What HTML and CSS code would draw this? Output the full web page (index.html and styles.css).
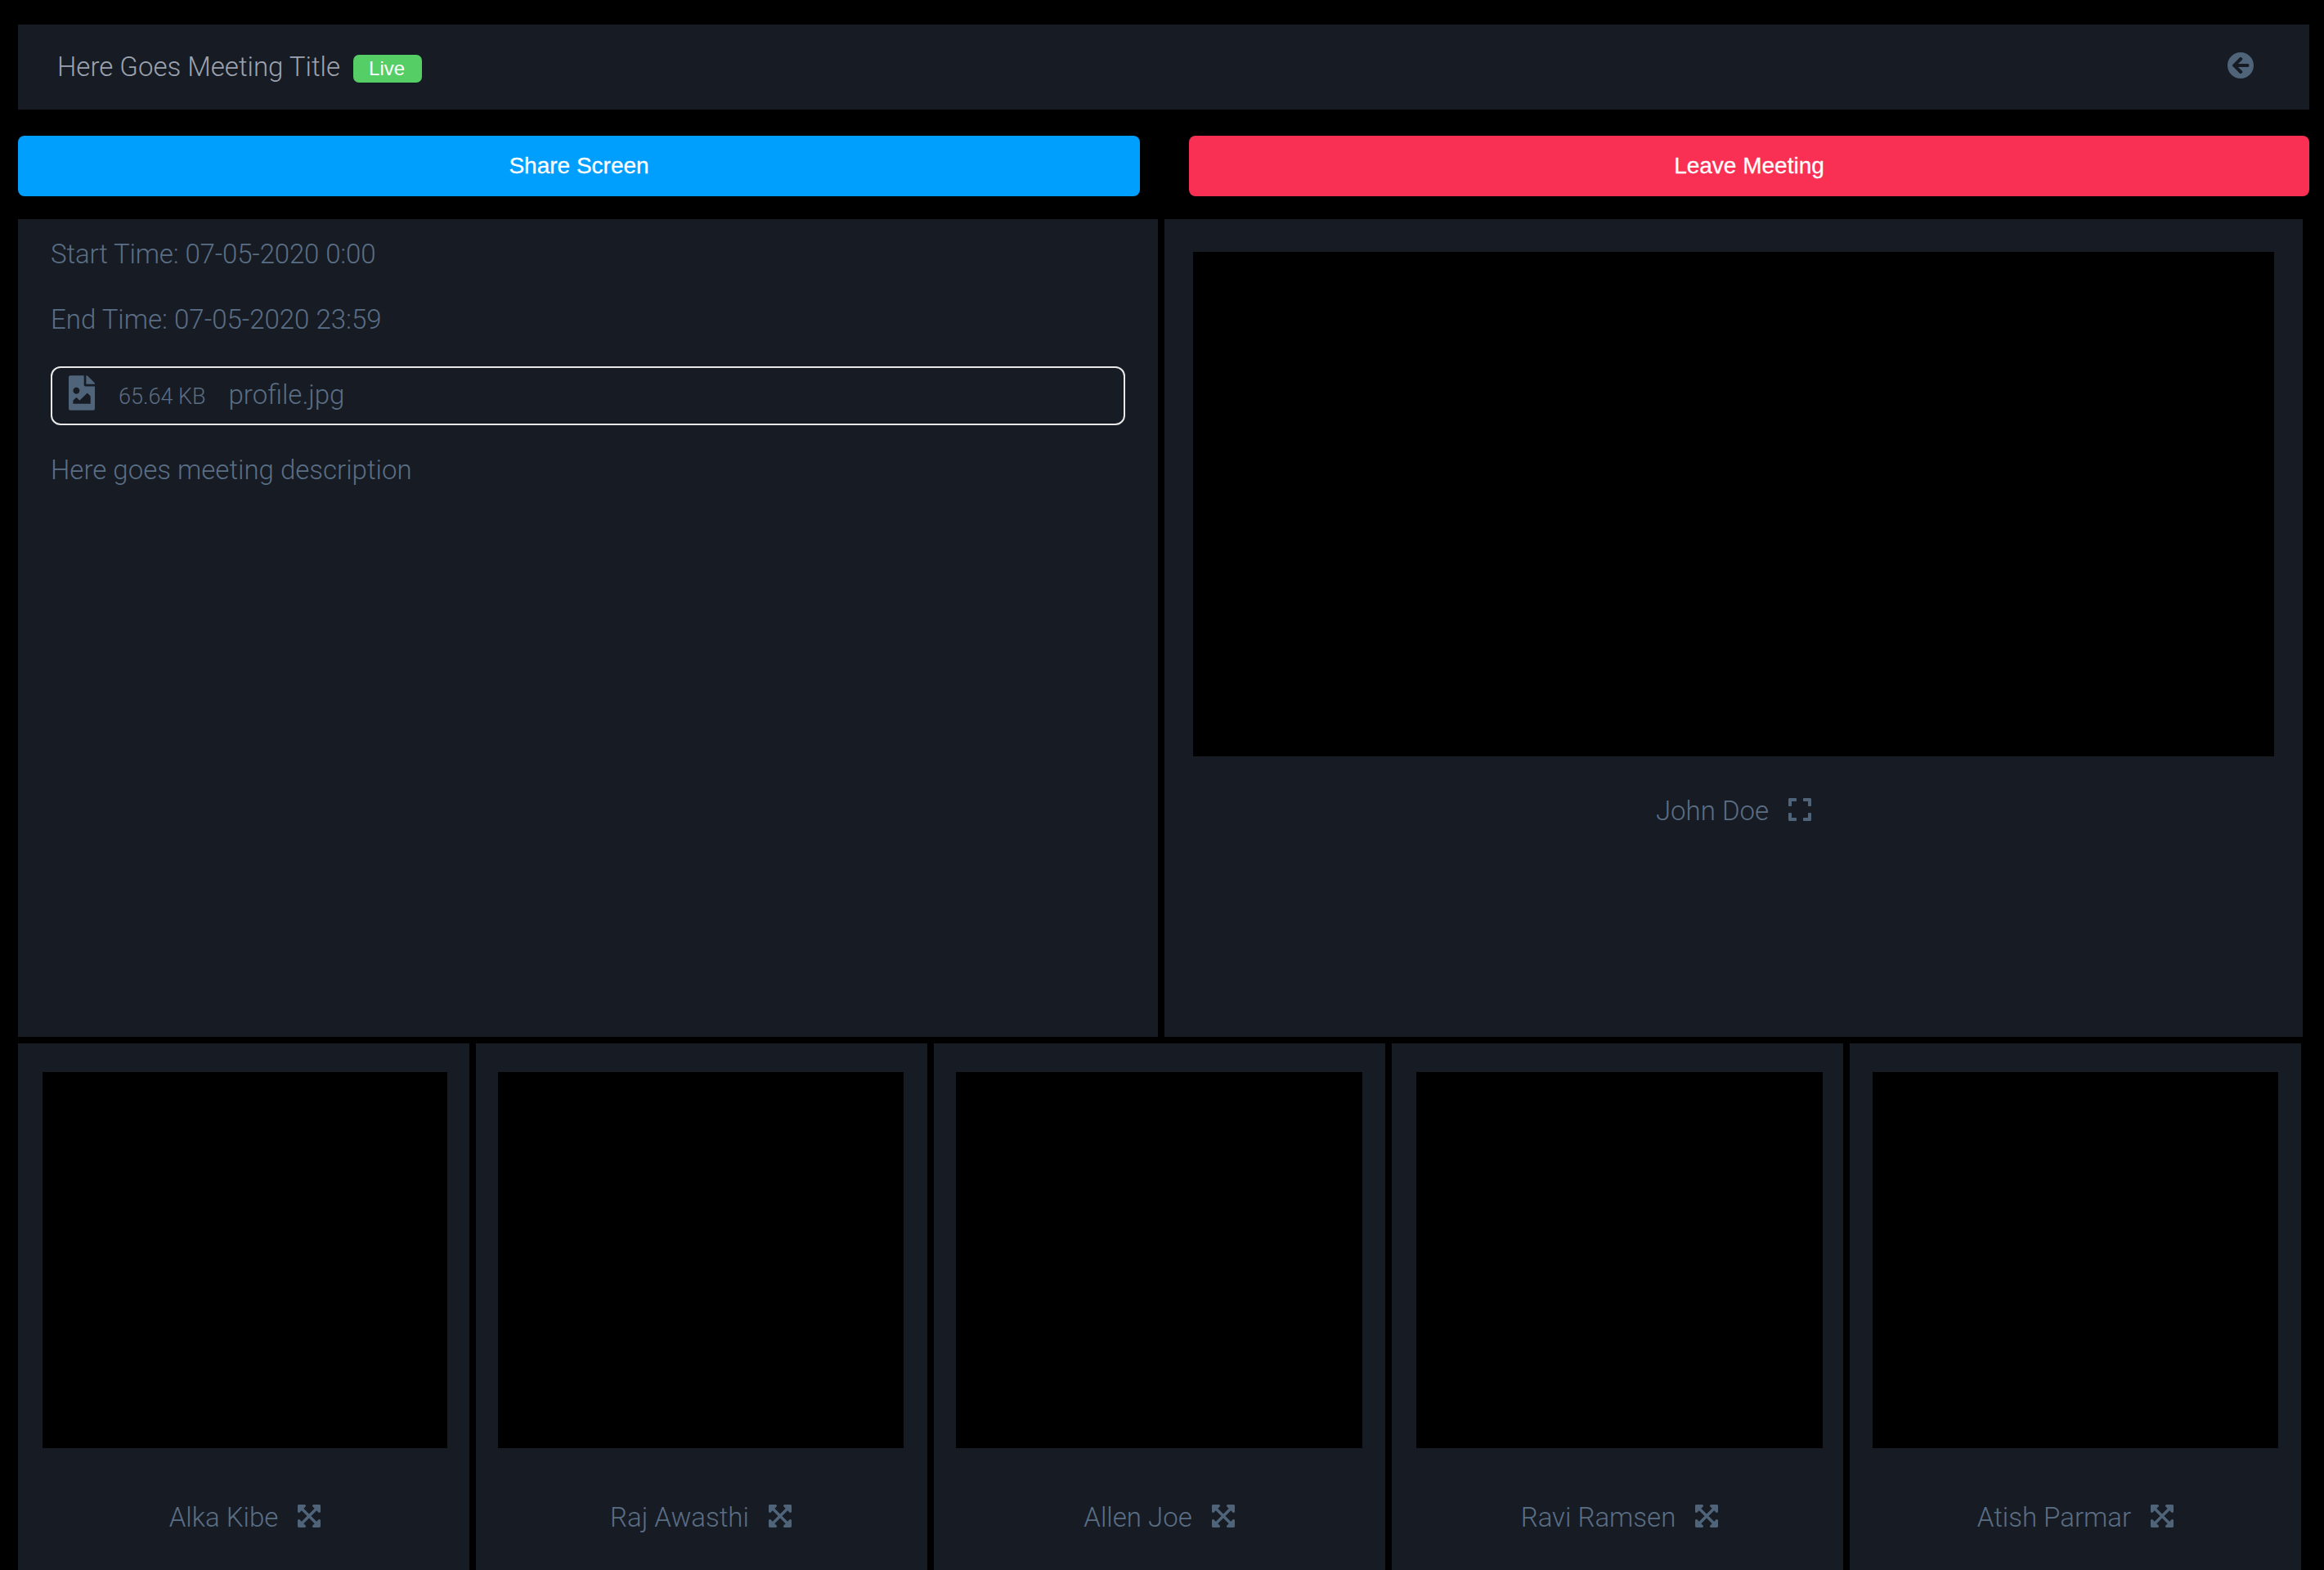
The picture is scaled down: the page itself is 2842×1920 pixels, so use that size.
FILE: index.html
```html
<!DOCTYPE html>
<html lang="en">
<head>
<meta charset="utf-8">
<title>Meeting</title>
<link rel="stylesheet" href="styles.css">
</head>
<body>
<svg class="defs" aria-hidden="true"><defs><path id="arrows" d="M448 344v112a23.940 23.940 0 0 1-24 24H312c-21.390 0-32.090-25.900-17-41l36.200-36.200L224 295.600 116.770 402.900 153 439c15.090 15.100 4.390 41-17 41H24a23.940 23.940 0 0 1-24-24V344c0-21.400 25.890-32.100 41-17l36.190 36.200L184.460 256 77.180 148.700 41 185c-15.100 15.100-41 4.400-41-17V56a23.940 23.940 0 0 1 24-24h112c21.390 0 32.090 25.900 17 41l-36.200 36.200L224 216.400l107.230-107.300L295 73c-15.090-15.100-4.390-41 17-41h112a23.940 23.940 0 0 1 24 24v112c0 21.400-25.890 32.100-41 17l-36.190-36.200L263.540 256l107.280 107.300L407 327.100c15.100-15.200 41-4.500 41 16.900z"/></defs></svg>
<header class="topbar">
  <div class="title-wrap">
    <h1 class="title">Here Goes Meeting Title</h1>
    <span class="badge">Live</span>
  </div>
  <svg class="back" viewBox="8 8 496 496" aria-hidden="true"><path fill="#506479" d="M256 504C119 504 8 393 8 256S119 8 256 8s248 111 248 248-111 248-248 248zm28.900-143.600L209.400 288H392c13.300 0 24-10.700 24-24v-16c0-13.300-10.700-24-24-24H209.400l75.500-72.400c9.700-9.300 9.900-24.800.4-34.300l-11-10.900c-9.400-9.400-24.600-9.400-33.900 0L107.700 239c-9.400 9.400-9.400 24.600 0 33.900l132.700 132.700c9.400 9.400 24.600 9.400 33.900 0l11-10.900c9.500-9.500 9.300-25-.4-34.300z"/></svg>
</header>
<div class="actions">
  <button class="btn btn-share">Share Screen</button>
  <button class="btn btn-leave">Leave Meeting</button>
</div>
<main class="upper">
  <section class="panel info">
    <p class="line line-start">Start Time: 07-05-2020 0:00</p>
    <p class="line">End Time: 07-05-2020 23:59</p>
    <div class="file">
      <svg class="file-icon" viewBox="0 0 384 512" aria-hidden="true"><path fill="#506479" d="M384 121.941V128H256V0h6.059a24 24 0 0 1 16.970 7.029l97.941 97.941a24.002 24.002 0 0 1 7.030 16.971zM248 160c-13.200 0-24-10.800-24-24V0H24C10.745 0 0 10.745 0 24v464c0 13.255 10.745 24 24 24h336c13.255 0 24-10.745 24-24V160H248zm-135.455 16c26.510 0 48 21.490 48 48s-21.490 48-48 48-48-21.490-48-48 21.491-48 48-48zm208 240h-256l.485-48.485L104.545 328c4.686-4.686 11.799-4.201 16.485.485L160.545 368 264.060 264.485c4.686-4.686 12.284-4.686 16.970 0L320.545 304v112z"/></svg>
      <span class="file-size">65.64 KB</span>
      <span class="file-name">profile.jpg</span>
    </div>
    <p class="line desc">Here goes meeting description</p>
  </section>
  <section class="panel main-video">
    <div class="video"></div>
    <div class="caption">
      <span>John Doe</span>
      <svg class="icon" viewBox="0 32 448 448" aria-hidden="true"><path fill="#506479" d="M0 180V56c0-13.300 10.700-24 24-24h124c6.600 0 12 5.400 12 12v40c0 6.600-5.400 12-12 12H64v84c0 6.600-5.400 12-12 12H12c-6.600 0-12-5.400-12-12zm288-136v40c0 6.600 5.400 12 12 12h84v84c0 6.600 5.400 12 12 12h40c6.600 0 12-5.400 12-12V56c0-13.300-10.700-24-24-24H300c-6.600 0-12 5.400-12 12zm148 276h-40c-6.600 0-12 5.400-12 12v84h-84c-6.600 0-12 5.400-12 12v40c0 6.600 5.400 12 12 12h124c13.300 0 24-10.700 24-24V332c0-6.600-5.400-12-12-12zM160 468v-40c0-6.600-5.400-12-12-12H64v-84c0-6.600-5.400-12-12-12H12c-6.600 0-12 5.400-12 12v124c0 13.300 10.700 24 24 24h124c6.600 0 12-5.400 12-12z"/></svg>
    </div>
  </section>
</main>
<section class="tiles">
  <article class="panel tile">
    <div class="video"></div>
    <div class="caption"><span>Alka Kibe</span><svg class="icon" viewBox="0 32 448 448" aria-hidden="true"><use href="#arrows" fill="#506479"/></svg></div>
  </article>
  <article class="panel tile">
    <div class="video"></div>
    <div class="caption"><span>Raj Awasthi</span><svg class="icon" viewBox="0 32 448 448" aria-hidden="true"><use href="#arrows" fill="#506479"/></svg></div>
  </article>
  <article class="panel tile">
    <div class="video"></div>
    <div class="caption"><span>Allen Joe</span><svg class="icon" viewBox="0 32 448 448" aria-hidden="true"><use href="#arrows" fill="#506479"/></svg></div>
  </article>
  <article class="panel tile">
    <div class="video"></div>
    <div class="caption"><span>Ravi Ramsen</span><svg class="icon" viewBox="0 32 448 448" aria-hidden="true"><use href="#arrows" fill="#506479"/></svg></div>
  </article>
  <article class="panel tile">
    <div class="video"></div>
    <div class="caption"><span>Atish Parmar</span><svg class="icon" viewBox="0 32 448 448" aria-hidden="true"><use href="#arrows" fill="#506479"/></svg></div>
  </article>
</section>
</body>
</html>
```
FILE: styles.css
```css
* { box-sizing: border-box; }
html, body { margin: 0; padding: 0; height: 100%; overflow: hidden; background: #000; }
body {
  padding: 30px 18px 0 22px;
  font-family: Roboto, "Liberation Sans", Arial, sans-serif;
  font-weight: 300;
  color: #5a6e84;
}
.defs { display: none; }
.topbar {
  height: 104px;
  background: #171b24;
  display: flex;
  align-items: center;
  justify-content: space-between;
  padding: 0 68px 0 48px;
}
.title-wrap { display: flex; align-items: center; gap: 16px; }
.title { margin: -2px 0 0; font-size: 33px; font-weight: 300; color: #9ca3af; line-height: 1; }
.badge {
  width: 84px; height: 34px; margin-top: 3px;
  background: #55cf65; border-radius: 7px;
  color: #fff; font-family: "Liberation Sans", Arial, sans-serif; font-weight: 400;
  font-size: 24px; line-height: 34px; padding-left: 19px;
}
.back { width: 32px; height: 32px; margin-top: -4px; }
.actions { display: grid; grid-template-columns: 1372px 1370px; column-gap: 60px; margin-top: 32px; }
.btn {
  height: 74px; border: 0; border-radius: 8px; color: #fff;
  font: 400 28px "Liberation Sans", Arial, sans-serif;
  -webkit-text-stroke: .3px #fff;
}
.btn-share { background: #009ffd; }
.btn-leave { background: #fa2f54; }
.upper { display: grid; grid-template-columns: 1394px 1392px; column-gap: 8px; height: 1000px; margin-top: 28px; }
.panel { background: #171b24; }
.info { padding: 25px 40px 0; }
.line { margin: 0; font-size: 33px; line-height: 36px; }
.line-start { letter-spacing: -.15px; }
.line + .line { margin-top: 44px; }
.file {
  display: flex; align-items: center;
  height: 72px; margin-top: 39px;
  border: 2px solid #e8e8e8; border-radius: 12px;
  padding: 0 0 0 20px;
}
.file-icon { width: 32px; height: 43px; margin-right: 29px; margin-top: -8px; }
.file-size { font-size: 27px; margin-right: 28px; margin-top: 1px; }
.file-name { font-size: 33px; margin-top: -3px; }
.line.desc { margin-top: 37px; }
.main-video { padding: 40px 35px 0; }
.video { background: #000; height: 460px; }
.main-video .video { height: 617px; }
.caption {
  display: flex; justify-content: center; align-items: center; gap: 24px;
  font-size: 33px; line-height: 36px;
}
.caption span { margin: 2px 0 -2px; }
.main-video .caption { margin-top: 47px; }
.icon { width: 28px; height: 28px; }
.tiles { display: grid; grid-template-columns: repeat(5, 552px); column-gap: 8px; margin-top: 8px; height: 644px; }
.tile { padding: 35px 28px 0 27px; }
.tile:nth-child(1) { padding-left: 30px; padding-right: 27px; }
.tile:nth-child(2) { padding-right: 29px; }
.tile:nth-child(4) { padding-left: 30px; padding-right: 25px; }
.tile:nth-child(5) { padding-left: 28px; }
.tile .caption { margin-top: 65px; }
```
